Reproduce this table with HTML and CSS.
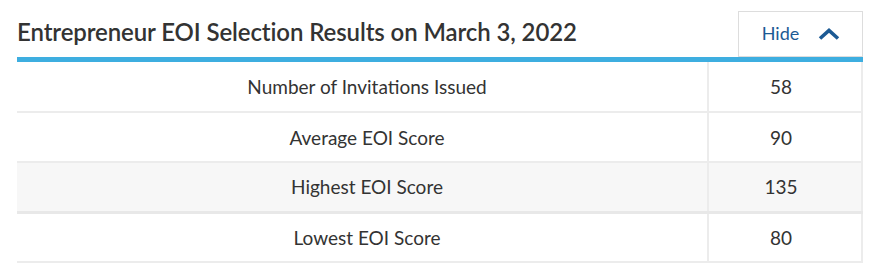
FILE: index.html
```html
<!DOCTYPE html>
<html>
<head>
<meta charset="utf-8">
<link rel="stylesheet" href="styles.css">
</head>
<body>
<div class="panel">
  <div class="panel-head">
    <h2 class="title">Entrepreneur EOI Selection Results on March 3, 2022</h2>
    <button class="toggle">
      <span class="toggle-label">Hide</span>
      <svg class="chev" width="22" height="12" viewBox="0 0 22 12"><path d="M2 10.5 L11 2.5 L20 10.5" fill="none" stroke="#1c5a94" stroke-width="3.6" stroke-linejoin="miter"/></svg>
    </button>
  </div>
  <table class="results">
    <tr><td class="label">Number of Invitations Issued</td><td class="val">58</td></tr>
    <tr><td class="label">Average EOI Score</td><td class="val">90</td></tr>
    <tr class="shade"><td class="label">Highest EOI Score</td><td class="val">135</td></tr>
    <tr><td class="label">Lowest EOI Score</td><td class="val">80</td></tr>
  </table>
</div>
</body>
</html>
```
FILE: styles.css
```css
html, body {
  margin: 0;
  padding: 0;
  background: #fff;
}
body {
  font-family: "Lato", "Open Sans", sans-serif;
  color: #333;
}
.panel {
  width: 846px;
  margin-left: 17px;
}
.panel-head {
  display: flex;
  align-items: flex-end;
  justify-content: space-between;
  padding-top: 11px;
  border-bottom: 5px solid #3eaee0;
}
.title {
  margin: 0 0 13px 0;
  font-size: 24px;
  font-weight: 600;
  line-height: 24px;
  color: #333;
  letter-spacing: -0.1px;
}
.toggle {
  box-sizing: border-box;
  width: 125px;
  height: 46px;
  border: 1px solid #ddd;
  background: #fff;
  display: flex;
  align-items: center;
  justify-content: center;
  gap: 19px;
  padding: 0 0 2px 1px;
  font-family: inherit;
  cursor: pointer;
}
.toggle-label {
  font-size: 18px;
  color: #1c5a94;
}
.chev {
  display: block;
  margin-top: 1px;
}
.results {
  width: 846px;
  border-collapse: collapse;
  font-size: 19px;
}
.results td {
  height: 50px;
  box-sizing: border-box;
  padding: 0;
  text-align: center;
  vertical-align: middle;
  border-bottom: 2px solid #ececec;
  color: #333;
}
.results td.label {
  width: 691px;
  padding-left: 10px;
}
.results td.val {
  padding-right: 8px;
  border-left: 2px solid #ececec;
  border-right: 2px solid #ececec;
}
.results tr.shade td {
  background: #f7f7f7;
  border-bottom: 3px solid #e8e8e8;
}
```
